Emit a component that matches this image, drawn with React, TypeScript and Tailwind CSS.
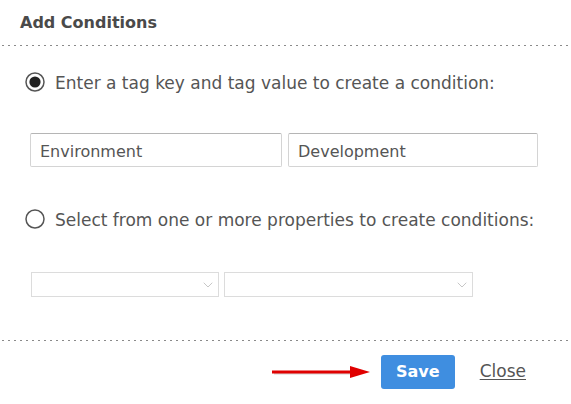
import { ChevronDown } from "lucide-react";

const Dots = () => (
  <div className="h-px w-full bg-[linear-gradient(to_right,#8a8a8a_2px,transparent_2px)] bg-[length:6px_1px] bg-[position:2px_0]" />
);

const Radio = ({ checked }: { checked?: boolean }) => (
  <svg width="20" height="20" viewBox="0 0 20 20" className="shrink-0">
    <circle cx="10" cy="10" r="9" fill="white" stroke="#555" strokeWidth="1.5" />
    {checked && <circle cx="10" cy="10" r="5.6" fill="#222" />}
  </svg>
);

export default function App() {
  return (
    <div className="w-[571px] h-[404px] bg-white text-[#555] font-['DejaVu_Sans',sans-serif] overflow-hidden">
      <div className="h-[45px] pl-[20px] pt-[11px] text-[16px] leading-[24px] font-bold text-[#4a4a4a]">
        Add Conditions
      </div>
      <Dots />

      <div className="mt-[26px] ml-[25px] flex items-center gap-[10px] h-[20px] text-[17px]">
        <Radio checked />
        <span className="mt-[4px]">Enter a tag key and tag value to create a condition:</span>
      </div>

      <div className="mt-[41px] ml-[30px] flex gap-[6px]">
        <div className="w-[252px] h-[34px] border border-[#d4d4d4] border-t-[#b5b5b5] rounded-[2px] flex items-center px-[9px] pt-[3px] text-[16px]">
          Environment
        </div>
        <div className="w-[250px] h-[34px] border border-[#d4d4d4] border-t-[#b5b5b5] rounded-[2px] flex items-center px-[9px] pt-[3px] text-[16px]">
          Development
        </div>
      </div>

      <div className="mt-[42px] ml-[25px] flex items-center gap-[10px] h-[20px] text-[17px]">
        <Radio />
        <span className="mt-[4px]">Select from one or more properties to create conditions:</span>
      </div>

      <div className="mt-[43px] ml-[31px] flex gap-[5px]">
        <div className="w-[188px] h-[25px] border border-[#dcdcdc] flex items-center justify-end pr-[2px]">
          <ChevronDown size={16} strokeWidth={1} className="text-[#aaa]" />
        </div>
        <div className="w-[249px] h-[25px] border border-[#dcdcdc] flex items-center justify-end pr-[2px]">
          <ChevronDown size={16} strokeWidth={1} className="text-[#aaa]" />
        </div>
      </div>

      <div className="mt-[43px]">
        <Dots />
      </div>

      <div className="mt-[14px] flex items-center justify-end pr-[45px]">
        <svg width="100" height="16" viewBox="0 0 100 16" className="mr-[9px]">
          <line x1="2" y1="9" x2="82" y2="9" stroke="#888" strokeWidth="3" opacity="0.35" />
          <line x1="0" y1="8" x2="80" y2="8" stroke="#e00000" strokeWidth="3" />
          <polygon points="78,2 98,8 78,14" fill="#e00000" />
        </svg>
        <button className="w-[74px] h-[34px] rounded-[3px] bg-[#3f8ee0] text-white text-[16px] font-semibold">
          Save
        </button>
        <span className="ml-[25px] text-[17px] underline underline-offset-2">Close</span>
      </div>
    </div>
  );
}
